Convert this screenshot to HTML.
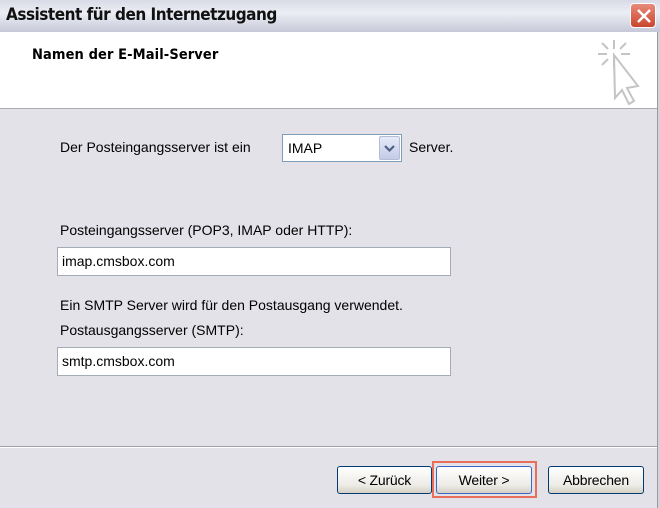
<!DOCTYPE html>
<html><head><meta charset="utf-8"><style>
*{margin:0;padding:0;box-sizing:border-box}
body{width:660px;height:508px;overflow:hidden;background:#e3e2e9;font-family:"Liberation Sans",sans-serif;font-size:14px;color:#000;position:relative}
.title{position:absolute;left:0;top:0;width:660px;height:32px;background:linear-gradient(#d9dae6,#eceef5 40%,#c6c8d8);}
.title span{position:absolute;left:6px;top:5px;font-size:17px;font-weight:bold;color:#111;letter-spacing:-0.5px;font-family:"DejaVu Sans Condensed","Liberation Sans",sans-serif}
.close{position:absolute;left:630px;top:3px;width:26px;height:25px;border-radius:4px;background:linear-gradient(#e98a7a,#c8452e);border:1px solid #fff;}
.close svg{position:absolute;left:4px;top:3px}
.header{position:absolute;left:0;top:32px;width:657px;height:77px;background:#fff;border-bottom:1px solid #a9a9b0}
.header b{position:absolute;left:32px;top:15px;font-size:14.5px;letter-spacing:0.1px;font-family:"DejaVu Sans Condensed","Liberation Sans",sans-serif}
.rb{position:absolute;left:657px;top:32px;width:3px;height:476px;background:#d4d3da;border-left:1px solid #9a9aa0}
.t{position:absolute;font-size:14px}
.inp{position:absolute;background:#fff;border:1px solid #a5acb5;font-size:14px;padding:5px 0 0 4px}
.sel{position:absolute;left:282px;top:134px;width:120px;height:28px;background:#fff;border:1px solid #7f9db9;padding:5px 0 0 5px;font-size:14px}
.arr{position:absolute;right:1px;top:1px;width:21px;height:24px;background:linear-gradient(#e6eaf8,#c3cbe6);border:1px solid #b6bdd6;border-radius:2px}
.sep{position:absolute;left:0;top:446px;width:657px;height:2px;border-top:1px solid #a0a0a8;border-bottom:1px solid #fff}
.btn{position:absolute;top:466px;height:28px;border:1px solid #003c74;border-radius:3px;background:linear-gradient(#fff,#ecebe6 70%,#d6d0c5);text-align:center;font-size:14px;line-height:26px;letter-spacing:-0.2px}
.focus{position:absolute;left:432px;top:461px;width:105px;height:37px;border:2px solid #e8705a}
</style></head><body>
<div class="title"><span>Assistent für den Internetzugang</span>
<div class="close"><svg width="18" height="18" viewBox="0 0 18 18"><path d="M3 3L15 15M15 3L3 15" stroke="#fff" stroke-width="2.5"/></svg></div></div>
<div class="header"><b>Namen der E-Mail-Server</b>
<svg style="position:absolute;left:594px;top:6px" width="50" height="70" viewBox="0 0 50 70">
<g stroke="#c4c4c4" stroke-width="2" fill="none">
<path d="M20 2V11M20 22V30M4 16H13M27 16H36M8 5L14 11M32 5L26 11M8 27L14 21"/>
<path d="M20 17L21 60L28 52L35 66L40 63L33 50L44 48Z" fill="#fff"/>
</g></svg></div>
<div class="rb"></div>
<div class="t" style="left:60px;top:139px">Der Posteingangsserver ist ein</div>
<div class="sel">IMAP<div class="arr"><svg width="19" height="22" viewBox="0 0 19 22"><path d="M5 9L9.5 13.5L14 9" stroke="#4d6185" stroke-width="2.2" fill="none"/></svg></div></div>
<div class="t" style="left:409px;top:139px">Server.</div>
<div class="t" style="left:60px;top:222px">Posteingangsserver (POP3, IMAP oder HTTP):</div>
<div class="inp" style="left:57px;top:247px;width:394px;height:29px">imap.cmsbox.com</div>
<div class="t" style="left:60px;top:297px">Ein SMTP Server wird für den Postausgang verwendet.</div>
<div class="t" style="left:60px;top:322px">Postausgangsserver (SMTP):</div>
<div class="inp" style="left:57px;top:347px;width:394px;height:29px">smtp.cmsbox.com</div>
<div class="sep"></div>
<div class="btn" style="left:337px;width:95px">&lt; Zurück</div>
<div class="focus"></div>
<div class="btn" style="left:436px;width:96px;border-color:#3a66c4">Weiter &gt;</div>
<div class="btn" style="left:548px;width:96px">Abbrechen</div>
</body></html>
